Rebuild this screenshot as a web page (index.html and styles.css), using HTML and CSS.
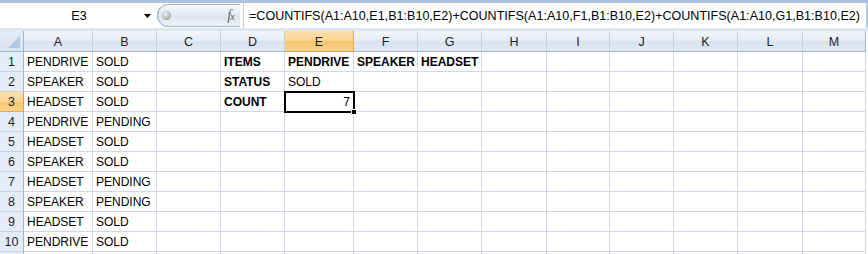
FILE: index.html
```html
<!DOCTYPE html>
<html>
<head>
<meta charset="utf-8">
<link rel="stylesheet" href="styles.css">
</head>
<body>
<div class="app">
  <div class="topstrip"></div>
  <div class="fbar">
    <div class="namebox">
      <span class="name">E3</span>
      <svg class="dd" width="7" height="4" viewBox="0 0 7 4"><path d="M0 0H7L3.5 4Z" fill="#000"/></svg>
    </div>
    <div class="fxpill">
      <span class="knob"></span>
      <span class="fx">f<span class="fxx">x</span></span>
    </div>
    <div class="sep"></div>
    <div class="formula">=COUNTIFS(A1:A10,E1,B1:B10,E2)+COUNTIFS(A1:A10,F1,B1:B10,E2)+COUNTIFS(A1:A10,G1,B1:B10,E2)</div>
  </div>
  <div class="band"></div>
  <div class="sheet">
    <div class="corner"><svg width="12" height="12" viewBox="0 0 12 12"><path d="M12 0V12H0Z" fill="#b4c6dc"/></svg></div>
    <div class="ch">A</div><div class="ch">B</div><div class="ch">C</div><div class="ch">D</div><div class="ch sel">E</div><div class="ch">F</div><div class="ch">G</div><div class="ch">H</div><div class="ch">I</div><div class="ch">J</div><div class="ch">K</div><div class="ch">L</div><div class="ch">M</div>

    <div class="rh">1</div><div class="c">PENDRIVE</div><div class="c">SOLD</div><div class="c"></div><div class="c b">ITEMS</div><div class="c b">PENDRIVE</div><div class="c b">SPEAKER</div><div class="c b">HEADSET</div><div class="c"></div><div class="c"></div><div class="c"></div><div class="c"></div><div class="c"></div><div class="c"></div>
    <div class="rh">2</div><div class="c">SPEAKER</div><div class="c">SOLD</div><div class="c"></div><div class="c b">STATUS</div><div class="c">SOLD</div><div class="c"></div><div class="c"></div><div class="c"></div><div class="c"></div><div class="c"></div><div class="c"></div><div class="c"></div><div class="c"></div>
    <div class="rh sel">3</div><div class="c">HEADSET</div><div class="c">SOLD</div><div class="c"></div><div class="c b">COUNT</div><div class="c active"><span>7</span><span class="handle"></span></div><div class="c"></div><div class="c"></div><div class="c"></div><div class="c"></div><div class="c"></div><div class="c"></div><div class="c"></div><div class="c"></div>
    <div class="rh">4</div><div class="c">PENDRIVE</div><div class="c">PENDING</div><div class="c"></div><div class="c"></div><div class="c"></div><div class="c"></div><div class="c"></div><div class="c"></div><div class="c"></div><div class="c"></div><div class="c"></div><div class="c"></div><div class="c"></div>
    <div class="rh">5</div><div class="c">HEADSET</div><div class="c">SOLD</div><div class="c"></div><div class="c"></div><div class="c"></div><div class="c"></div><div class="c"></div><div class="c"></div><div class="c"></div><div class="c"></div><div class="c"></div><div class="c"></div><div class="c"></div>
    <div class="rh">6</div><div class="c">SPEAKER</div><div class="c">SOLD</div><div class="c"></div><div class="c"></div><div class="c"></div><div class="c"></div><div class="c"></div><div class="c"></div><div class="c"></div><div class="c"></div><div class="c"></div><div class="c"></div><div class="c"></div>
    <div class="rh">7</div><div class="c">HEADSET</div><div class="c">PENDING</div><div class="c"></div><div class="c"></div><div class="c"></div><div class="c"></div><div class="c"></div><div class="c"></div><div class="c"></div><div class="c"></div><div class="c"></div><div class="c"></div><div class="c"></div>
    <div class="rh">8</div><div class="c">SPEAKER</div><div class="c">PENDING</div><div class="c"></div><div class="c"></div><div class="c"></div><div class="c"></div><div class="c"></div><div class="c"></div><div class="c"></div><div class="c"></div><div class="c"></div><div class="c"></div><div class="c"></div>
    <div class="rh">9</div><div class="c">HEADSET</div><div class="c">SOLD</div><div class="c"></div><div class="c"></div><div class="c"></div><div class="c"></div><div class="c"></div><div class="c"></div><div class="c"></div><div class="c"></div><div class="c"></div><div class="c"></div><div class="c"></div>
    <div class="rh">10</div><div class="c">PENDRIVE</div><div class="c">SOLD</div><div class="c"></div><div class="c"></div><div class="c"></div><div class="c"></div><div class="c"></div><div class="c"></div><div class="c"></div><div class="c"></div><div class="c"></div><div class="c"></div><div class="c"></div>
    <div class="rh"></div><div class="c"></div><div class="c"></div><div class="c"></div><div class="c"></div><div class="c"></div><div class="c"></div><div class="c"></div><div class="c"></div><div class="c"></div><div class="c"></div><div class="c"></div><div class="c"></div><div class="c"></div>
  </div>
</div>
</body>
</html>
```

FILE: styles.css
```css
* { box-sizing: border-box; }
html, body { margin: 0; padding: 0; background: #ffffff; overflow: hidden; }
body { font-family: "Liberation Sans", Arial, sans-serif; font-size: 12px; color: #000; }
.app { width: 868px; height: 254px; overflow: hidden; }

.topstrip { height: 3px; background: #a9c3e6; }

.fbar {
  height: 25px;
  display: flex;
  align-items: stretch;
  background: #ffffff;
}
.namebox {
  width: 157px;
  display: flex;
  align-items: center;
  padding-right: 6px;
}
.namebox .name { flex: 1; text-align: center; padding-left: 14px; font-size: 12.5px; }

.fxpill {
  width: 83px;
  margin: 1px 0 1px 0;
  border: 1px solid #a7b6ca;
  border-left: 1px solid #98a9c0;
  border-radius: 12px 0 0 12px;
  border-right: none;
  background: linear-gradient(#f6f8fb, #dfe5ee 55%, #eef2f7);
  display: flex;
  align-items: center;
  justify-content: space-between;
  padding: 0 6px 0 4px;
}
.knob {
  width: 9px; height: 9px; border-radius: 50%;
  background: radial-gradient(circle at 40% 35%, #f2f2f2, #a9a9a9 70%, #8c8c8c);
}
.fx {
  font-family: "Liberation Serif", "Times New Roman", serif;
  font-style: italic;
  font-size: 14px;
  color: #666;
  letter-spacing: -1px;
}
.fxx { font-size: 11px; }
.sep { width: 1px; background: #c4cdd9; margin: 0 5px 0 3px; }
.formula {
  flex: 1;
  display: flex;
  align-items: center;
  white-space: nowrap;
  overflow: hidden;
  font-size: 12.5px;
  letter-spacing: 0.03px;
  border-right: 2px solid #b6cae4;
}

.band { height: 3px; background: #dde7f4; }

.sheet {
  display: grid;
  grid-template-columns: 24px 69px 64px 64px 64px 69px 64px 64px 65px 63px 64px 64px 65px 63px 2px;
  grid-auto-rows: 20px;
  grid-template-rows: 21px;
}

.corner {
  background: linear-gradient(#e4ecf7, #d7e2f0);
  border-right: 1px solid #9eb6ce;
  border-bottom: 1px solid #9eb6ce;
  display: flex; align-items: flex-end; justify-content: flex-end;
  padding: 0 3px 3px 0;
}
.ch {
  background: linear-gradient(#f3f6fb, #e4ebf5 50%, #d9e3f1 51%, #dfe8f4);
  border-right: 1px solid #c5d1e1;
  border-bottom: 1px solid #9eb6ce;
  display: flex; align-items: center; justify-content: center;
  color: #1f1f1f;
  padding-top: 1px;
  font-size: 12.5px;
}
.ch:nth-child(14) { border-right: 1px solid #9eb6ce; }
.ch.sel {
  background: linear-gradient(#fbe1ab, #f9d596 50%, #f5c46a 51%, #f8d58f);
  border-right-color: #f2a746;
  border-bottom: 1px solid #f29536;
}
.rh {
  grid-column: 1;
  background: #e4ecf7;
  border-right: 1px solid #9eb6ce;
  border-bottom: 1px solid #c5d1e1;
  display: flex; align-items: center; justify-content: center;
  color: #1f1f1f;
  padding-top: 1px;
  font-size: 12.5px;
}
.rh.sel {
  background: linear-gradient(#fbe1ab, #f9d596 50%, #f5c46a 51%, #f8d58f);
  border-right-color: #f29536;
  border-bottom-color: #f2a746;
}
.c {
  border-right: 1px solid #d0d7e5;
  border-bottom: 1px solid #d0d7e5;
  display: flex; align-items: center;
  padding: 1px 0 0 3px;
  white-space: nowrap;
}
.c.b { font-weight: bold; }
.c.active {
  position: relative;
  justify-content: flex-end;
  padding-right: 3px;
  outline: 2px solid #000;
  outline-offset: -1px;
  z-index: 1;
}
.handle {
  position: absolute;
  right: -4px; bottom: -4px;
  width: 6px; height: 6px;
  background: #000;
  border: 1px solid #fff;
}
```
